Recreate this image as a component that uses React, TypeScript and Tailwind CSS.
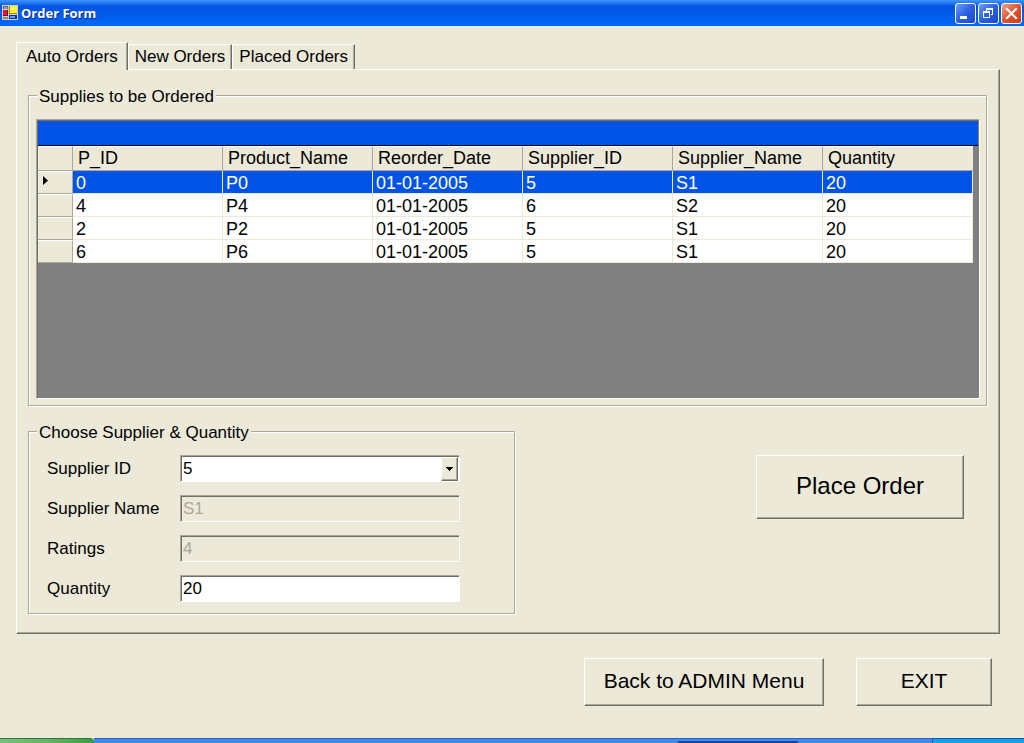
import { useState } from 'react';
import type { ReactNode } from 'react';

const columns = ['P_ID', 'Product_Name', 'Reorder_Date', 'Supplier_ID', 'Supplier_Name', 'Quantity'];

const rows = [
  ['0', 'P0', '01-01-2005', '5', 'S1', '20'],
  ['4', 'P4', '01-01-2005', '6', 'S2', '20'],
  ['2', 'P2', '01-01-2005', '5', 'S1', '20'],
  ['6', 'P6', '01-01-2005', '5', 'S1', '20'],
];

const tabs = ['Auto Orders', 'New Orders', 'Placed Orders'];

const raised =
  'border border-t-white border-l-white border-r-[#716f64] border-b-[#716f64] shadow-[inset_-1px_-1px_0_#aca899]';
const sunken =
  'border border-t-[#aca899] border-l-[#aca899] border-r-white border-b-white shadow-[inset_1px_1px_0_#716f64]';

function FormIcon() {
  return (
    <svg className="h-4 w-4" viewBox="0 0 16 16" shapeRendering="crispEdges" aria-hidden="true">
      <rect x="0" y="0" width="16" height="15" fill="#d4d0c0" />
      <rect x="1" y="1" width="5" height="3" fill="#5a6a9c" />
      <rect x="2" y="2" width="3" height="2" fill="#9a9ca0" />
      <rect x="1" y="5" width="5" height="6" fill="#7a1020" />
      <rect x="1" y="5" width="4" height="5" fill="#e8103c" />
      <rect x="1" y="12" width="5" height="2" fill="#8c8c84" />
      <rect x="7" y="1" width="8" height="8" fill="#a08c10" />
      <rect x="8" y="1" width="7" height="7" fill="#ffee20" />
      <rect x="9" y="2" width="3" height="3" fill="#fff890" />
      <rect x="7" y="10" width="8" height="4" fill="#0a2fa8" />
      <rect x="8" y="11" width="5" height="2" fill="#5aa0ff" />
    </svg>
  );
}

function CaptionButton({ label, tone, children }: { label: string; tone: 'blue' | 'red'; children: ReactNode }) {
  const fill =
    tone === 'red'
      ? 'bg-linear-to-br from-[#f0a088] via-[#e0532f] to-[#c83c14]'
      : 'bg-linear-to-br from-[#6f9cf5] via-[#2b60e0] to-[#1a48c8]';
  return (
    <button
      type="button"
      aria-label={label}
      className={`flex h-[21px] w-[21px] items-center justify-center rounded-[3px] border border-white ${fill}`}
    >
      {children}
    </button>
  );
}

function TitleBar() {
  return (
    <header className="flex h-[26px] shrink-0 items-center justify-between bg-linear-to-b from-[#3f96ff] via-[#0053e1] via-25% to-[#0468fb] pr-[2px] pl-[2px]">
      <div className="flex items-center gap-[3px]">
        <FormIcon />
        <h1 className="font-['Open_Sans','Noto_Sans',sans-serif] text-[13px] leading-4 font-bold text-white [text-shadow:1px_1px_0_#0a2a80]">
          Order Form
        </h1>
      </div>
      <div className="flex gap-[2px]">
        <CaptionButton label="Minimize" tone="blue">
          <svg className="h-[19px] w-[19px]" viewBox="0 0 19 19" aria-hidden="true">
            <rect x="4" y="12" width="7" height="3" fill="#fff" />
          </svg>
        </CaptionButton>
        <CaptionButton label="Restore" tone="blue">
          <svg className="h-[19px] w-[19px]" viewBox="0 0 19 19" shapeRendering="crispEdges" aria-hidden="true">
            <path d="M7 4h7v2H7zM7 6h1v1H7zM13 6h1v5h-1zM12 10h1v1h-1z" fill="#fff" />
            <path d="M4 7h7v7H4zM5 9v4h5V9z" fill="#fff" fillRule="evenodd" />
          </svg>
        </CaptionButton>
        <CaptionButton label="Close" tone="red">
          <svg className="h-[19px] w-[19px]" viewBox="0 0 19 19" aria-hidden="true">
            <path d="M5 5l9 9M14 5l-9 9" stroke="#fff" strokeWidth="2.2" strokeLinecap="square" />
          </svg>
        </CaptionButton>
      </div>
    </header>
  );
}

function GroupBox({ title, className = '', children }: { title: string; className?: string; children: ReactNode }) {
  return (
    <fieldset className={`min-w-0 border border-[#aca899] shadow-[1px_1px_0_#fff,inset_1px_1px_0_#fff] ${className}`}>
      <legend className="ml-[8px] bg-[#ece9d8] px-[2px] pt-1 leading-5">{title}</legend>
      {children}
    </fieldset>
  );
}

function OrdersGrid() {
  return (
    <div className={`h-[280px] overflow-hidden bg-[#808080] p-px text-[18px] leading-5 ${sunken}`}>
      <div className="h-[25px] border-b border-black bg-[#0053e5]" />
      <table className="w-[935px] table-fixed border-separate border-spacing-0">
        <thead>
          <tr className="h-[25px] bg-[#ece9d8]">
            <td className="w-[35px] border-t border-r border-b border-t-white border-r-[#aca899] border-b-[#aca899] p-0" />
            {columns.map((name, i) => (
              <th
                key={name}
                scope="col"
                className={`border-t border-b border-t-white border-b-[#aca899] pt-0 pr-0 pb-[2px] pl-[5px] text-left font-normal ${
                  i < 5 ? 'border-r border-r-[#aca899]' : ''
                }`}
              >
                {name}
              </th>
            ))}
          </tr>
        </thead>
        <tbody>
          {rows.map((row, r) => (
            <tr key={row[0]} className={`h-[23px] ${r === 0 ? 'bg-[#0053e5] text-white' : 'bg-white'}`}>
              <td className="border-t border-r border-b border-t-white border-r-[#aca899] border-b-[#aca899] bg-[#ece9d8] p-0">
                {r === 0 && (
                  <svg className="mb-1 ml-[5px] h-[9px] w-[5px]" viewBox="0 0 5 9" aria-hidden="true">
                    <path d="M0 0l5 4.5L0 9z" fill="#000" />
                  </svg>
                )}
              </td>
              {row.map((cell, c) => (
                <td key={columns[c]} className="border-r border-b border-[#ece9d8] pt-[2px] pr-0 pb-0 pl-[3px]">
                  {cell}
                </td>
              ))}
            </tr>
          ))}
        </tbody>
      </table>
    </div>
  );
}

function Field({ id, label, children }: { id: string; label: string; children: ReactNode }) {
  return (
    <div className="flex items-center">
      <label htmlFor={id} className="w-[133px] shrink-0">
        {label}
      </label>
      <div className="relative h-[27px] w-[280px]">{children}</div>
    </div>
  );
}

const inputStyle = `h-full w-full rounded-none pl-[2px] outline-none ${sunken}`;

export default function App() {
  const [tab, setTab] = useState(0);
  const [supplier, setSupplier] = useState('5');
  const [quantity, setQuantity] = useState('20');
  const supplierName = supplier === '5' ? 'S1' : 'S2';

  return (
    <div className="flex min-h-screen flex-col bg-[#ece9d8] font-['Liberation_Sans',Arial,sans-serif] text-[17px] leading-5 text-black">
      <TitleBar />
      <main className="grow pt-4 pr-6 pl-4">
        <div role="tablist" className="flex h-[27px] items-end">
          {tabs.map((name, i) => (
            <button
              key={name}
              type="button"
              role="tab"
              aria-selected={tab === i}
              onClick={() => setTab(i)}
              className={`border-t border-r border-l border-t-white border-r-[#716f64] border-l-white whitespace-nowrap shadow-[inset_-1px_0_0_#aca899] ${
                tab === i ? 'relative -mb-px h-[28px] bg-[#ece9d8] px-[9px]' : 'h-[25px] px-[6px]'
              }`}
            >
              {name}
            </button>
          ))}
        </div>
        <section
          role="tabpanel"
          className="border-t border-r border-b border-l border-t-white border-r-[#716f64] border-b-[#716f64] border-l-white pt-[13px] pr-3 pb-[19px] pl-[11px] shadow-[inset_-1px_-1px_0_#aca899]"
        >
          <GroupBox title="Supplies to be Ordered">
            <div className="pt-3 pr-[6px] pb-[6px] pl-[7px]">
              <OrdersGrid />
            </div>
          </GroupBox>
          <div className="mt-[13px] flex items-start justify-between">
            <GroupBox title="Choose Supplier & Quantity" className="w-[487px]">
              <div className="flex flex-col gap-[13px] pt-3 pb-[11px] pl-[18px]">
                <Field id="supplier-id" label="Supplier ID">
                  <select
                    id="supplier-id"
                    value={supplier}
                    onChange={(e) => setSupplier(e.target.value)}
                    className={`appearance-none bg-white ${inputStyle}`}
                  >
                    <option>5</option>
                    <option>6</option>
                  </select>
                  <span
                    aria-hidden="true"
                    className={`pointer-events-none absolute top-[2px] right-[2px] bottom-px flex w-[17px] items-center justify-center bg-[#ece9d8] ${raised}`}
                  >
                    <svg className="h-1 w-[7px]" viewBox="0 0 7 4" shapeRendering="crispEdges">
                      <path d="M0 0h7v1H0zM1 1h5v1H1zM2 2h3v1H2zM3 3h1v1H3z" fill="#000" />
                    </svg>
                  </span>
                </Field>
                <Field id="supplier-name" label="Supplier Name">
                  <input id="supplier-name" disabled value={supplierName} className={`bg-[#ece9d8] text-[#aca899] ${inputStyle}`} />
                </Field>
                <Field id="ratings" label="Ratings">
                  <input id="ratings" disabled value="4" className={`bg-[#ece9d8] text-[#aca899] ${inputStyle}`} />
                </Field>
                <Field id="quantity" label="Quantity">
                  <input
                    id="quantity"
                    value={quantity}
                    onChange={(e) => setQuantity(e.target.value)}
                    className={`bg-white ${inputStyle}`}
                  />
                </Field>
              </div>
            </GroupBox>
            <button type="button" className={`mt-9 mr-[23px] h-16 w-52 pb-[2px] text-[24px] leading-8 ${raised}`}>
              Place Order
            </button>
          </div>
        </section>
        <div className="mt-6 flex justify-end gap-8 pr-2">
          <button type="button" className={`h-12 w-60 pb-[2px] text-[21px] leading-6 ${raised}`}>
            Back to ADMIN Menu
          </button>
          <button type="button" className={`h-12 w-[136px] pb-[2px] text-[21px] leading-6 ${raised}`}>
            EXIT
          </button>
        </div>
      </main>
      <footer className="flex h-[5px] shrink-0">
        <div className="w-[94px] rounded-tr-sm border-t border-[#2c7a3c] bg-linear-to-r from-[#7cc07c] via-[#68b468] to-[#3c9c3c]" />
        <div className="grow border-t border-[#2a62c8] bg-[#3f8bec]" />
        <div className="w-[120px] border-t border-[#2a62c8] bg-linear-to-b from-[#4289ea] from-40% to-[#1448a8] to-50%" />
        <div className="w-[134px] border-t border-[#2a62c8] bg-[#3f8bec]" />
        <div className="w-[92px] border-t border-l border-[#0c58b8] bg-[#18a0f0]" />
      </footer>
    </div>
  );
}
